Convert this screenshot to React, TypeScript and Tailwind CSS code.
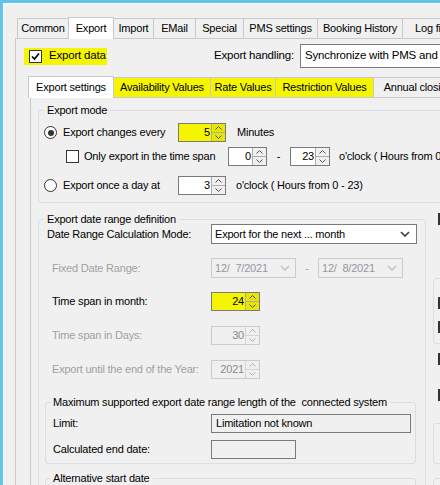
import clsx from 'clsx';

const YELLOW = 'bg-[#f5f500]';

const Up = ({ dis }: { dis?: boolean }) => (
  <svg width="7" height="4" viewBox="0 0 7 4">
    <path d="M0.5 3.5 L3.5 0.5 L6.5 3.5" fill="none" stroke={dis ? '#b4b4b4' : '#505050'} />
  </svg>
);

const Down = ({ dis }: { dis?: boolean }) => (
  <svg width="7" height="4" viewBox="0 0 7 4">
    <path d="M0.5 0.5 L3.5 3.5 L6.5 0.5" fill="none" stroke={dis ? '#b4b4b4' : '#505050'} />
  </svg>
);

const Chevron = ({ dis }: { dis?: boolean }) => (
  <svg width="10" height="6" viewBox="0 0 10 6">
    <path d="M1 1 L5 5 L9 1" fill="none" stroke={dis ? '#c4c4c4' : '#3c3c3c'} strokeWidth="1.6" />
  </svg>
);

type SpinProps = { value: string; w: string; hl?: boolean; dis?: boolean };

const Spin = ({ value, w, hl, dis }: SpinProps) => (
  <div
    className={clsx(
      'flex h-[19px] shrink-0 border',
      w,
      dis ? 'border-[#cccccc]' : 'border-[#7a7a7a]',
      hl ? YELLOW : dis ? 'bg-[#f0f0f0]' : 'bg-white'
    )}
  >
    <div className={clsx('flex-1 pr-[1px] text-right leading-[17px]', dis ? 'text-[#8a8a8a]' : 'text-black')}>
      {value}
    </div>
    <div
      className={clsx(
        'flex w-[14px] flex-col border-l',
        dis ? 'border-[#d4d4d4]' : 'border-[#adadad]',
        hl ? 'bg-[#e6e600]' : 'bg-[#f0f0f0]'
      )}
    >
      <div className={clsx('flex flex-1 items-center justify-center border-b', dis ? 'border-[#d4d4d4]' : 'border-[#adadad]')}>
        <Up dis={dis} />
      </div>
      <div className="flex flex-1 items-center justify-center">
        <Down dis={dis} />
      </div>
    </div>
  </div>
);

const Radio = ({ on }: { on?: boolean }) => (
  <div className="flex h-[13px] w-[13px] shrink-0 items-center justify-center rounded-full border border-[#333333] bg-white">
    {on && <div className="h-[6px] w-[6px] rounded-full bg-[#333333]" />}
  </div>
);

const Check = ({ on }: { on?: boolean }) => (
  <div className="flex h-[13px] w-[13px] shrink-0 items-center justify-center border border-[#333333] bg-white">
    {on && (
      <svg width="11" height="11" viewBox="0 0 11 11">
        <path d="M2 5.5 L4.5 8 L9 2.5" fill="none" stroke="#000" strokeWidth="1.7" />
      </svg>
    )}
  </div>
);

const DateBox = ({ value }: { value: string }) => (
  <div className="flex h-[20px] w-[85px] shrink-0 items-center justify-between border border-[#cccccc] bg-[#f0f0f0] pl-[3px] pr-[5px] text-[#9a93a3]">
    <span className="whitespace-pre">{value}</span>
    <Chevron dis />
  </div>
);

type TabProps = { label: string; w: string; sel?: boolean; hl?: boolean };

const Tab = ({ label, w, sel, hl }: TabProps) => (
  <div
    className={clsx(
      'relative -ml-px flex shrink-0 items-center justify-center whitespace-nowrap border border-b-0 border-[#c9c9c9] first:ml-0',
      w,
      sel ? 'z-10 -mb-px h-[22px] bg-white pb-[1px]' : 'h-[20px]',
      !sel && (hl ? YELLOW : 'bg-[#f0f0f0]')
    )}
  >
    {label}
  </div>
);

const Mark = ({ className }: { className?: string }) => (
  <div className={clsx('h-[12px] w-[13px] border-2 border-[#333333] bg-white', className)} />
);

const App = () => {
  return (
    <div className="h-[485px] w-[440px] overflow-hidden bg-[#5fc6ea] pl-[3px] pt-[3px] font-['Liberation_Sans',Arial,sans-serif] text-[11px] tracking-[-0.2px] text-black">
      <div className="h-full w-[640px] border-l border-t border-white bg-[#f0f0f0] pl-[11px] pt-[13px]">
        {/* main tabs */}
        <div className="flex h-[21px] items-end pl-[2px]">
          <Tab label="Common" w="w-[52px]" />
          <Tab label="Export" w="w-[46px]" sel />
          <Tab label="Import" w="w-[41px]" />
          <Tab label="EMail" w="w-[43px]" />
          <Tab label="Special" w="w-[49px]" />
          <Tab label="PMS settings" w="w-[75px]" />
          <Tab label="Booking History" w="w-[86px]" />
          <Tab label="Log file" w="w-[60px]" />
        </div>

        <div className="h-[460px] border-l border-t border-[#c9c9c9]">
          <div className="mt-[5px] flex h-[24px] items-center">
            <div className={clsx('ml-[8px] flex h-[17px] w-[83px] items-center pl-[5px]', YELLOW)}>
              <Check on />
              <span className="ml-[7px] whitespace-nowrap text-[11.5px]">Export data</span>
            </div>
            <span className="ml-[107px] w-[86px] whitespace-nowrap text-[11.5px]">Export handling:</span>
            <div className="flex h-[24px] w-[260px] items-center overflow-hidden whitespace-nowrap border border-[#7a7a7a] bg-white pl-[4px] text-[11.5px]">
              Synchronize with PMS and export changes
            </div>
          </div>

          {/* export sub tabs */}
          <div className="ml-[12px] mt-[7px] flex h-[22px] items-end">
            <Tab label="Export settings" w="w-[86px]" sel />
            <Tab label="Availability Values" w="w-[98px]" hl />
            <Tab label="Rate Values" w="w-[66px]" hl />
            <Tab label="Restriction Values" w="w-[99px]" hl />
            <Tab label="Annual closing" w="w-[90px]" />
          </div>

          <div className="ml-[14px] h-[400px] border-l border-t border-[#c9c9c9] pl-[7px] pt-[5px]">
            <fieldset className="w-[560px] rounded-[3px] border border-[#d5dfe5] pb-[7px]">
              <legend className="ml-[5px] h-[14px] px-[3px] leading-[14px]">Export mode</legend>
              <div className="mt-[6px] flex h-[19px] items-center pl-[5px]">
                <Radio on />
                <span className="ml-[6px] w-[115px]">Export changes every</span>
                <Spin value="5" w="w-[48px]" hl />
                <span className="ml-[11px]">Minutes</span>
              </div>
              <div className="mt-[5px] flex h-[19px] items-center pl-[27px]">
                <Check />
                <span className="ml-[5px] w-[144px]">Only export in the time span</span>
                <Spin value="0" w="w-[39px]" />
                <span className="w-[23px] text-center">-</span>
                <Spin value="23" w="w-[40px]" />
                <span className="ml-[9px] whitespace-nowrap">o'clock ( Hours from 0 - 23)</span>
              </div>
              <div className="mt-[10px] flex h-[19px] items-center pl-[5px]">
                <Radio />
                <span className="ml-[6px] w-[115px]">Export once a day at</span>
                <Spin value="3" w="w-[48px]" />
                <span className="ml-[10px] whitespace-nowrap">o'clock ( Hours from 0 - 23)</span>
              </div>
            </fieldset>

            <div className="mt-[9px] flex">
              <fieldset className="h-[320px] w-[388px] shrink-0 rounded-[3px] border border-[#d5dfe5]">
                <legend className="ml-[5px] h-[14px] px-[3px] leading-[14px]">Export date range definition</legend>
                <div className="-mt-[2px] flex h-[20px] items-center">
                  <span className="w-[172px] pl-[8px]">Date Range Calculation Mode:</span>
                  <div className="flex h-[20px] w-[206px] items-center justify-between border border-[#7a7a7a] bg-white pl-[3px] pr-[6px]">
                    <span>Export for the next ... month</span>
                    <Chevron />
                  </div>
                </div>
                <div className="mt-[14px] flex h-[20px] items-center">
                  <span className="w-[172px] pl-[13px] text-[#a0a0a0]">Fixed Date Range:</span>
                  <DateBox value="12/  7/2021" />
                  <span className="w-[22px] text-center text-[#a0a0a0]">-</span>
                  <DateBox value="12/  8/2021" />
                </div>
                <div className="mt-[14px] flex h-[19px] items-center">
                  <span className="w-[172px] pl-[13px]">Time span in month:</span>
                  <Spin value="24" w="w-[49px]" hl />
                </div>
                <div className="mt-[15px] flex h-[19px] items-center">
                  <span className="w-[172px] pl-[13px] text-[#a0a0a0]">Time span in Days:</span>
                  <Spin value="30" w="w-[49px]" dis />
                </div>
                <div className="mt-[15px] flex h-[19px] items-center">
                  <span className="w-[172px] pl-[13px] text-[#a0a0a0]">Export until the end of the Year:</span>
                  <Spin value="2021" w="w-[49px]" dis />
                </div>

                <fieldset className="ml-[6px] mt-[16px] w-[371px] rounded-[3px] border border-[#d5dfe5] pb-[4px]">
                  <legend className="ml-[4px] h-[14px] whitespace-pre px-[3px] leading-[14px]">
                    Maximum supported export date range length of the  connected system
                  </legend>
                  <div className="mt-[5px] flex h-[19px] items-center">
                    <span className="w-[165px] pl-[7px]">Limit:</span>
                    <div className="flex h-[19px] w-[200px] items-center border border-[#7a7a7a] bg-[#f0f0f0] pl-[4px]">
                      Limitation not known
                    </div>
                  </div>
                  <div className="mt-[7px] flex h-[19px] items-center">
                    <span className="w-[165px] pl-[7px]">Calculated end date:</span>
                    <div className="h-[19px] w-[85px] border border-[#7a7a7a] bg-[#f0f0f0]" />
                  </div>
                </fieldset>

                <fieldset className="ml-[6px] mt-[7px] h-[40px] w-[371px] rounded-[3px] border border-[#d5dfe5]">
                  <legend className="ml-[4px] h-[14px] px-[3px] leading-[14px]">Alternative start date</legend>
                </fieldset>
              </fieldset>

              {/* right column, mostly cut off */}
              <div className="ml-[7px] flex w-[60px] flex-col">
                <Mark className="ml-[5px] mt-[1px]" />
                <div className="mt-[53px] h-[66px] rounded-[3px] border border-[#d5dfe5] pl-[4px]">
                  <Mark className="mt-[18px]" />
                  <Mark className="mt-[12px]" />
                </div>
                <Mark className="ml-[5px] mt-[9px]" />
                <Mark className="ml-[5px] mt-[24px]" />
                <div className="mt-[22px] h-[41px] rounded-[3px] border border-[#d5dfe5]" />
                <div className="mt-[14px] h-[40px] rounded-[3px] border border-[#d5dfe5]" />
              </div>
            </div>
          </div>
        </div>
      </div>
    </div>
  );
};

export default App;
